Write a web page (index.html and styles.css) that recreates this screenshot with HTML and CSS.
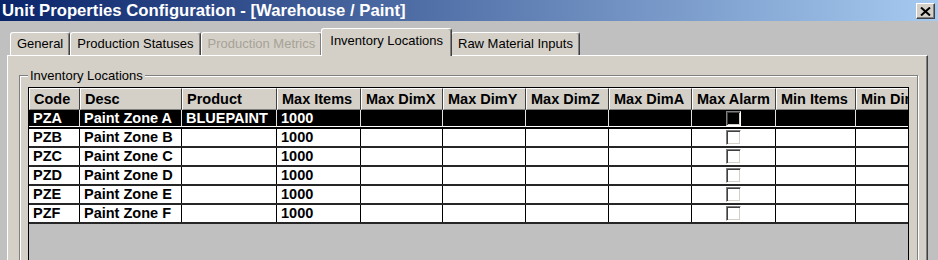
FILE: index.html
```html
<!DOCTYPE html>
<html lang="en">
<head>
    <meta charset="UTF-8">
    <title>Unit Properties Configuration</title>
    <link rel="stylesheet" href="styles.css">
</head>
<body>
    <div class="titlebar">
        <span class="title">Unit Properties Configuration - [Warehouse / Paint]</span>
        <button class="close">
            <svg xmlns="http://www.w3.org/2000/svg" viewBox="0 0 11 9" width="11" height="9"><path d="M1 0.5 L10 8.5 M10 0.5 L1 8.5" stroke="#000" stroke-width="2"></path></svg>
        </button>
    </div>
    <div class="tabs">
        <div class="tab">General</div>
        <div class="tab">Production Statuses</div>
        <div class="tab disabled">Production Metrics</div>
        <div class="tab active">Inventory Locations</div>
        <div class="tab">Raw Material Inputs</div>
    </div>
    <div class="panel">
        <fieldset class="group">
            <legend>Inventory Locations</legend>
            <div class="grid">
                <div class="row head">
                    <div class="cell">Code</div>
                    <div class="cell">Desc</div>
                    <div class="cell">Product</div>
                    <div class="cell">Max Items</div>
                    <div class="cell">Max DimX</div>
                    <div class="cell">Max DimY</div>
                    <div class="cell">Max DimZ</div>
                    <div class="cell">Max DimA</div>
                    <div class="cell">Max Alarm</div>
                    <div class="cell">Min Items</div>
                    <div class="cell">Min DimX</div>
                </div>
                <div class="row selected">
                    <div class="cell">PZA</div>
                    <div class="cell">Paint Zone A</div>
                    <div class="cell">BLUEPAINT</div>
                    <div class="cell">1000</div>
                    <div class="cell"></div>
                    <div class="cell"></div>
                    <div class="cell"></div>
                    <div class="cell"></div>
                    <div class="cell alarm"><span class="check"></span></div>
                    <div class="cell"></div>
                    <div class="cell"></div>
                </div>
                <div class="row">
                    <div class="cell">PZB</div>
                    <div class="cell">Paint Zone B</div>
                    <div class="cell"></div>
                    <div class="cell">1000</div>
                    <div class="cell"></div>
                    <div class="cell"></div>
                    <div class="cell"></div>
                    <div class="cell"></div>
                    <div class="cell alarm"><span class="check"></span></div>
                    <div class="cell"></div>
                    <div class="cell"></div>
                </div>
                <div class="row">
                    <div class="cell">PZC</div>
                    <div class="cell">Paint Zone C</div>
                    <div class="cell"></div>
                    <div class="cell">1000</div>
                    <div class="cell"></div>
                    <div class="cell"></div>
                    <div class="cell"></div>
                    <div class="cell"></div>
                    <div class="cell alarm"><span class="check"></span></div>
                    <div class="cell"></div>
                    <div class="cell"></div>
                </div>
                <div class="row">
                    <div class="cell">PZD</div>
                    <div class="cell">Paint Zone D</div>
                    <div class="cell"></div>
                    <div class="cell">1000</div>
                    <div class="cell"></div>
                    <div class="cell"></div>
                    <div class="cell"></div>
                    <div class="cell"></div>
                    <div class="cell alarm"><span class="check"></span></div>
                    <div class="cell"></div>
                    <div class="cell"></div>
                </div>
                <div class="row">
                    <div class="cell">PZE</div>
                    <div class="cell">Paint Zone E</div>
                    <div class="cell"></div>
                    <div class="cell">1000</div>
                    <div class="cell"></div>
                    <div class="cell"></div>
                    <div class="cell"></div>
                    <div class="cell"></div>
                    <div class="cell alarm"><span class="check"></span></div>
                    <div class="cell"></div>
                    <div class="cell"></div>
                </div>
                <div class="row">
                    <div class="cell">PZF</div>
                    <div class="cell">Paint Zone F</div>
                    <div class="cell"></div>
                    <div class="cell">1000</div>
                    <div class="cell"></div>
                    <div class="cell"></div>
                    <div class="cell"></div>
                    <div class="cell"></div>
                    <div class="cell alarm"><span class="check"></span></div>
                    <div class="cell"></div>
                    <div class="cell"></div>
                </div>
            </div>
        </fieldset>
    </div>
</body>
</html>
```

FILE: styles.css
```css
body {
    margin: 0;
    height: 260px;
    overflow: hidden;
    background-color: #c0c0c0;
    font-family: "Liberation Sans", Arial, sans-serif;
    color: #000;
}
.titlebar {
    height: 21px;
    display: flex;
    align-items: center;
    justify-content: space-between;
    padding: 0 3px 0 2px;
    background: linear-gradient(to right, #0a246a, #a6caf0);
}
.title {
    color: #fff;
    font-weight: bold;
    font-size: 16.7px;
    line-height: 21px;
}
.close {
    width: 19px;
    height: 16px;
    padding: 0;
    margin-top: 1px;
    display: flex;
    align-items: center;
    justify-content: center;
    background-color: #d4d0c8;
    border: 1px solid;
    border-color: #fff #404040 #404040 #fff;
    box-shadow: inset -1px -1px 0 #808080;
}
.tabs {
    height: 34px;
    display: flex;
    align-items: flex-end;
    padding-left: 10px;
}
.tab {
    height: 23px;
    box-sizing: border-box;
    padding: 0 6px;
    font-size: 13px;
    line-height: 22px;
    background-color: #d4d0c8;
    border-top: 1px solid #fff;
    border-left: 1px solid #fff;
    border-right: 1px solid #404040;
    box-shadow: inset -1px 0 0 #808080;
    border-radius: 3px 3px 0 0;
    white-space: nowrap;
}
.tab.disabled {
    color: #a6a296;
}
.tab.active {
    height: 28px;
    margin: 0 -1px -1px -1px;
    padding: 0 8px;
    line-height: 23px;
    position: relative;
    z-index: 1;
}
.panel {
    width: 921px;
    height: 205px;
    margin-left: 7px;
    box-sizing: border-box;
    background-color: #d4d0c8;
    border-top: 1px solid #fff;
    border-left: 1px solid #fff;
    border-right: 1px solid #404040;
    box-shadow: inset -1px 0 0 #808080;
    padding-top: 1px;
}
.group {
    margin: 11px 9px 0 11px;
    padding: 4px 7px 0 8px;
    min-width: 0;
    border: 1px solid #808080;
    box-shadow: 1px 1px 0 #fff, inset 1px 1px 0 #fff;
}
.group legend {
    padding: 0 2px;
    font-size: 13px;
    line-height: 15px;
    background-color: #d4d0c8;
}
.grid {
    width: 881px;
    height: 180px;
    box-sizing: border-box;
    border: 1px solid #000;
    border-bottom: none;
    background-color: #c0c0c0;
    overflow: hidden;
    font-size: 14.5px;
    font-weight: bold;
}
.row {
    display: grid;
    grid-template-columns: 51px 102px 95px 84px 82px 83px 83px 83px 84px 80px 80px;
    height: 19px;
    box-sizing: border-box;
    border-bottom: 2px solid #262626;
    background-color: #fff;
}
.cell {
    border-right: 1px solid #000;
    padding-left: 4px;
    line-height: 17px;
    white-space: nowrap;
    overflow: hidden;
}
.row.head {
    height: 22px;
    border-bottom: none;
    background-color: #d4d0c8;
}
.head .cell {
    line-height: 20px;
    border-top: 1px solid #fff;
    border-left: 1px solid #fff;
    border-right: 1px solid #404040;
    border-bottom: 1px solid #808080;
}
.row.selected {
    background-color: #000;
    color: #fff;
    border-bottom-color: #000;
    box-shadow: inset 0 -1px 0 #fff;
}
.selected .cell {
    border-right-color: #e0e0e0;
}
.cell.alarm {
    padding: 1px 0 0;
    display: flex;
    justify-content: center;
    align-items: flex-start;
}
.check {
    width: 15px;
    height: 15px;
    box-sizing: border-box;
    border: 1px solid;
    border-color: #808080 #fff #fff #808080;
    box-shadow: inset 1px 1px 0 #404040, inset -1px -1px 0 #d4d0c8;
}
```
